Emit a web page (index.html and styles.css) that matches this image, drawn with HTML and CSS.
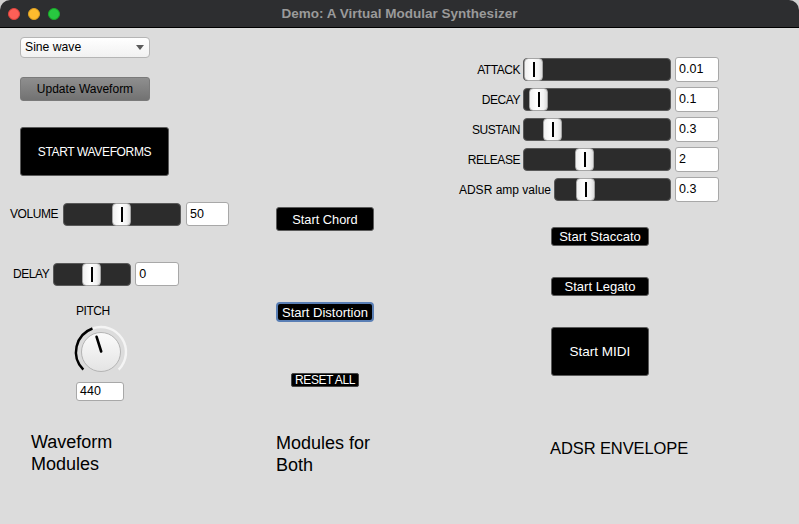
FILE: index.html
```
<!DOCTYPE html>
<html>
<head>
<meta charset="utf-8">
<title>Demo: A Virtual Modular Synthesizer</title>
<link rel="stylesheet" href="styles.css">
</head>
<body>
<div class="window">
  <div class="titlebar">
    <div class="lights">
      <span class="light red"></span>
      <span class="light yellow"></span>
      <span class="light green"></span>
    </div>
    <div class="title">Demo: A Virtual Modular Synthesizer</div>
    <div></div>
  </div>
  <div class="content">
    <div class="col col-left">
      <div class="select">Sine wave<span class="caret"></span></div>
      <div class="gray-btn">Update Waveform</div>
      <div class="black-btn big caps waveforms">START WAVEFORMS</div>
      <div class="row volume-row">
        <span class="label caps">VOLUME</span>
        <div class="slider" style="width:118px"><span class="thumb" style="left:48px"></span></div>
        <div class="entry e43">50</div>
      </div>
      <div class="row delay-row">
        <span class="label caps">DELAY</span>
        <div class="slider" style="width:78px"><span class="thumb" style="left:28px"></span></div>
        <div class="entry e44">0</div>
      </div>
      <div class="label caps pitch-label">PITCH</div>
      <svg class="knob" width="60" height="56" viewBox="0 0 60 56">
        <defs>
          <linearGradient id="kg" x1="0" y1="0" x2="0" y2="1">
            <stop offset="0" stop-color="#fbfbfb"/>
            <stop offset="1" stop-color="#e4e4e4"/>
          </linearGradient>
        </defs>
        <path d="M21.45 4.51 A25 25 0 0 1 47.68 45.68" fill="none" stroke="#f4f4f4" stroke-width="2.5"/>
        <path d="M12.32 45.68 A25 25 0 0 1 21.45 4.51" fill="none" stroke="#000" stroke-width="2.5"/>
        <circle cx="30" cy="28" r="19.5" fill="url(#kg)" stroke="#b4b4b4" stroke-width="1"/>
        <line x1="30.2" y1="27.5" x2="25.6" y2="12.8" stroke="#000" stroke-width="2.6" stroke-linecap="round"/>
      </svg>
      <div class="entry pitch-entry">440</div>
      <div class="heading left-heading">Waveform Modules</div>
    </div>
    <div class="col col-mid">
      <div class="black-btn chord">Start Chord</div>
      <div class="black-btn distortion">Start Distortion</div>
      <div class="black-btn caps reset">RESET ALL</div>
      <div class="heading mid-heading">Modules for Both</div>
    </div>
    <div class="col col-right">
      <div class="adsr">
        <div class="row arow">
          <span class="label caps">ATTACK</span>
          <div class="slider" style="width:148px"><span class="thumb" style="left:0px"></span></div>
          <div class="entry e44">0.01</div>
        </div>
        <div class="row arow">
          <span class="label caps">DECAY</span>
          <div class="slider" style="width:148px"><span class="thumb" style="left:5px"></span></div>
          <div class="entry e44">0.1</div>
        </div>
        <div class="row arow">
          <span class="label caps">SUSTAIN</span>
          <div class="slider" style="width:148px"><span class="thumb" style="left:19px"></span></div>
          <div class="entry e44">0.3</div>
        </div>
        <div class="row arow">
          <span class="label caps">RELEASE</span>
          <div class="slider" style="width:148px"><span class="thumb" style="left:51px"></span></div>
          <div class="entry e44">2</div>
        </div>
        <div class="row arow">
          <span class="label">ADSR amp value</span>
          <div class="slider" style="width:117px"><span class="thumb" style="left:21px"></span></div>
          <div class="entry e44">0.3</div>
        </div>
      </div>
      <div class="black-btn small-btn staccato">Start Staccato</div>
      <div class="black-btn small-btn legato">Start Legato</div>
      <div class="black-btn big midi">Start MIDI</div>
      <div class="heading adsr-heading">ADSR ENVELOPE</div>
    </div>
  </div>
</div>
</body>
</html>
```
FILE: styles.css
```
html, body {
  margin: 0;
  padding: 0;
  background: #d0d0d0;
}
body {
  font-family: "Liberation Sans", Arial, sans-serif;
  color: #000;
  width: 799px;
  height: 524px;
  overflow: hidden;
}
.window {
  width: 799px;
  height: 524px;
  background: #dcdcdc;
  border-radius: 10px 10px 0 0;
  overflow: hidden;
  display: flex;
  flex-direction: column;
}
.titlebar {
  height: 27px;
  background: #2d2e30;
  border-bottom: 1px solid #000;
  display: grid;
  grid-template-columns: 1fr auto 1fr;
  align-items: center;
}
.lights {
  display: flex;
  gap: 8px;
  padding-left: 8px;
  padding-top: 1px;
}
.light {
  width: 12px;
  height: 12px;
  border-radius: 50%;
  box-sizing: border-box;
}
.red { background: #fe5f57; border: 0.5px solid #e0443e; }
.yellow { background: #febc2e; border: 0.5px solid #dea123; }
.green { background: #28c840; border: 0.5px solid #1aab29; }
.title {
  color: #9a9a9a;
  font-weight: bold;
  font-size: 13.5px;
}
.content {
  flex: 1;
  display: flex;
}
.col {
  display: flex;
  flex-direction: column;
  align-items: flex-start;
}
.col-left { width: 266px; }
.col-mid { width: 180px; }
.col-right { width: 273px; }

.caps { letter-spacing: -0.45px; }
.label {
  font-size: 12px;
  line-height: 14px;
  white-space: nowrap;
}

/* dropdown */
.select {
  margin: 9px 0 0 20px;
  width: 130px;
  height: 21px;
  box-sizing: border-box;
  border: 1px solid #b5b5b5;
  border-radius: 4px;
  background: linear-gradient(#ffffff, #f1f1f1);
  font-size: 12.2px;
  line-height: 19px;
  padding-left: 4px;
  position: relative;
}
.caret {
  position: absolute;
  right: 5px;
  top: 7px;
  width: 0;
  height: 0;
  border-left: 4px solid transparent;
  border-right: 4px solid transparent;
  border-top: 5px solid #5a5a5a;
}
.gray-btn {
  margin: 19px 0 0 20px;
  width: 130px;
  height: 24px;
  box-sizing: border-box;
  border: 1px solid #7a7a7a;
  border-radius: 3px;
  background: linear-gradient(#8f8f8f, #727272);
  font-size: 12px;
  line-height: 22px;
  text-align: center;
}
.black-btn {
  background: #000;
  color: #fff;
  border-radius: 3px;
  box-sizing: border-box;
  border: 1px solid #5a5a5a;
  text-align: center;
  font-size: 13px;
  display: flex;
  align-items: center;
  justify-content: center;
  white-space: nowrap;
}
.waveforms {
  margin: 26px 0 0 20px;
  width: 149px;
  height: 49px;
  font-size: 12px;
  letter-spacing: -0.35px;
}
.row {
  display: flex;
  align-items: center;
}
.volume-row {
  margin: 26px 0 0 10px;
  height: 24px;
  gap: 5px;
}
.delay-row {
  margin: 36px 0 0 13px;
  height: 24px;
  gap: 4px;
}
.slider {
  height: 23px;
  box-sizing: border-box;
  background: #2c2c2c;
  border: 1px solid #595959;
  border-radius: 4px;
  position: relative;
}
.thumb {
  position: absolute;
  top: -1px;
  bottom: -1px;
  width: 19px;
  box-sizing: border-box;
  background: linear-gradient(90deg, #f0f0f0, #ffffff 40%, #f2f2f2 80%, #dcdcdc);
  border: 1px solid #a5a5a5;
  border-radius: 4px;
}
.thumb::after {
  content: "";
  position: absolute;
  left: 8px;
  top: 3px;
  bottom: 3px;
  width: 2px;
  background: #000;
}
.entry {
  height: 24px;
  box-sizing: border-box;
  background: #fff;
  border: 1px solid #a8a8a8;
  border-radius: 3px;
  font-size: 12.5px;
  line-height: 22px;
  padding-left: 3px;
}
.e43 { width: 43px; }
.e44 { width: 44px; }
.pitch-label {
  margin: 18px 0 0 76px;
  font-size: 12px;
}
.knob {
  display: block;
  margin: 6px 0 0 71px;
}
.pitch-entry {
  margin: 2px 0 0 76px;
  width: 48px;
  height: 19px;
  line-height: 17px;
}
.heading {
  font-size: 18px;
  line-height: 22px;
  width: 100px;
}
.left-heading { margin: 30px 0 0 31px; }

/* middle */
.chord {
  margin: 179px 0 0 10px;
  width: 98px;
  height: 24px;
  font-size: 12.8px;
}
.distortion {
  margin: 71px 0 0 10px;
  width: 98px;
  height: 20px;
  border: 2px solid #5a7fb5;
  border-radius: 4px;
}
.reset {
  margin: 51px 0 0 25px;
  width: 68px;
  height: 14px;
  font-size: 12px;
  border-radius: 2px;
  border-color: #444;
}
.mid-heading { margin: 45px 0 0 10px; }

/* right */
.adsr {
  margin-top: 29px;
  width: 273px;
  display: flex;
  flex-direction: column;
  gap: 5px;
}
.arow {
  height: 25px;
  justify-content: flex-end;
}
.arow .label { margin-right: 3px; }
.arow .entry { margin-left: 4px; height: 25px; line-height: 23px; }
.small-btn {
  width: 98px;
  height: 19px;
  margin-left: 105px;
}
.staccato { margin-top: 25px; }
.legato { margin-top: 31px; }
.midi {
  margin: 31px 0 0 105px;
  width: 98px;
  height: 49px;
  font-size: 13.5px;
}
.adsr-heading {
  margin: 62px 0 0 104px;
  width: auto;
  font-size: 16.5px;
  line-height: 20px;
  letter-spacing: -0.1px;
}
```
